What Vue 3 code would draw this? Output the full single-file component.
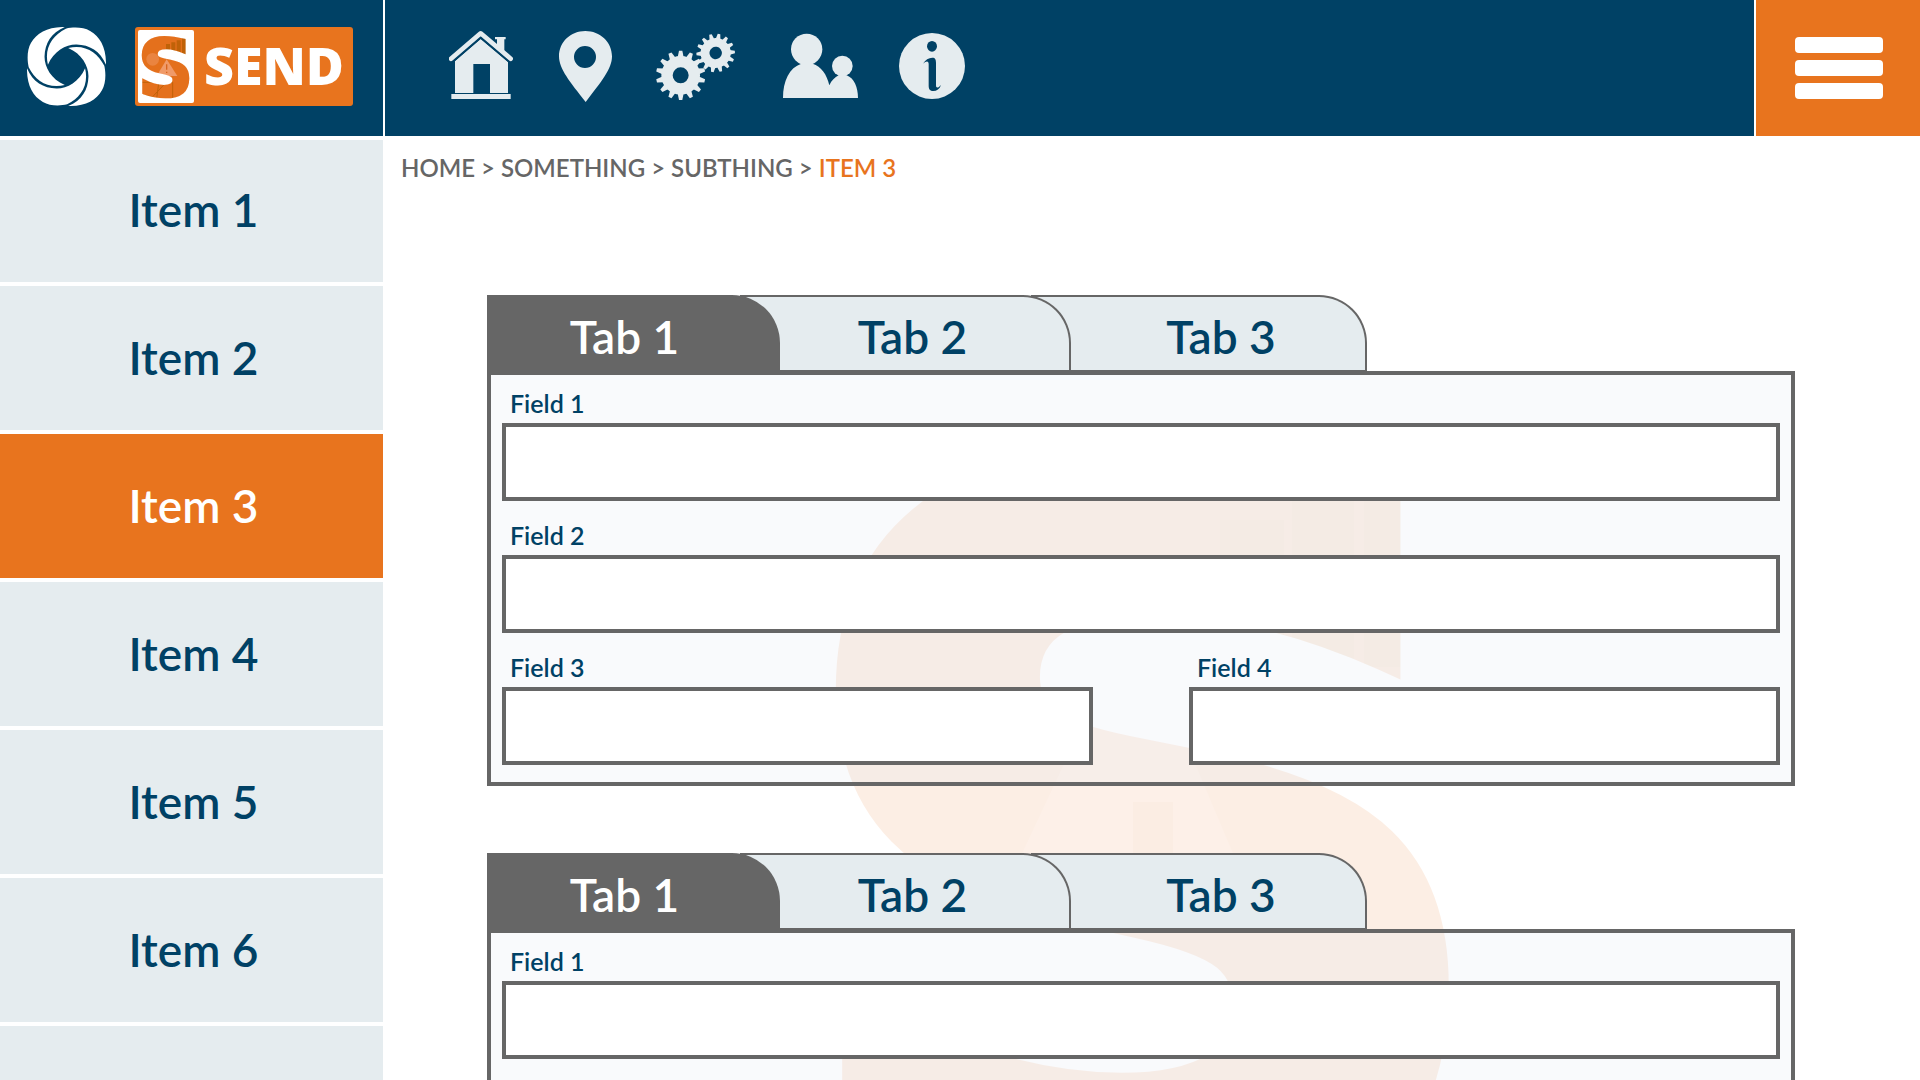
<template>
    <div class="page">
        <header class="top-bar">
            <div class="brand">
                <svg class="swirl" viewBox="-117 -117 234 234" aria-hidden="true">
                    <path
                        v-for="angle in [0, 90, 180, 270]"
                        :key="angle"
                        :transform="`rotate(${angle})`"
                        d="M-55 -5 C-67 -55 -42 -92 -2 -112 C20 -117 50 -117 70 -105 C100 -88 118 -55 117 -5 C100 -46 68 -64 30 -65 C0 -66 -38 -46 -55 -5 Z"
                    />
                </svg>
                <div class="send-logo">
                    <svg class="send-mark" viewBox="0 0 168 219" aria-hidden="true">
                        <defs>
                            <mask id="mark-mask">
                                <text class="mark-letter" x="83" y="197" text-anchor="middle">S</text>
                            </mask>
                        </defs>
                        <rect width="168" height="219" fill="#ffffff" />
                        <g mask="url(#mark-mask)">
                            <rect width="168" height="219" fill="#e4701c" />
                            <path d="M84 60 V42 H96 V64 Z M100 60 V37 H112 V66 Z M116 62 V31 H128 V68 Z M132 72 V25 H152 V72 Z" fill="#c06208" />
                            <circle cx="44" cy="88" r="19" fill="#ea8440" />
                            <path d="M86 88 L118 138 H56 Z" fill="#f09a68" />
                            <path d="M86 103 V119 M86 125 V129" stroke="#d8641c" stroke-width="4" />
                            <path d="M12 157 H104 V206 M12 196 L44 200 L80 162 M62 160 L56 206" fill="none" stroke="#c06208" stroke-width="3" />
                        </g>
                    </svg>
                    <span class="send-name">SEND</span>
                </div>
            </div>

            <nav class="icon-nav" aria-label="Main">
                <a href="#" aria-label="Home">
                    <svg width="64" height="73" viewBox="87 60 192 219">
                        <path d="M93 146 L182 70 L272 146" fill="none" stroke="#e5ecef" stroke-width="14" stroke-linecap="round" stroke-linejoin="round" />
                        <path d="M225 81 H257 V88 H253 V128 L231 108 V88 H225 Z" />
                        <path d="M182 87 L264 156 V249 H210 V162 H160 V249 H105 V153 Z" />
                        <path class="cut-line" d="M96 158 L182 84 L270 158" />
                        <rect x="94" y="252" width="178" height="15" />
                    </svg>
                </a>
                <a href="#" aria-label="Location">
                    <svg width="59" height="73" viewBox="399 60 177 219">
                        <path fill-rule="evenodd" d="M496 63 C540 63 576 96 576 139 C576 176 545 214 497 276 C450 216 417 177 417 139 C417 96 452 63 496 63 Z M495 108 A33 33 0 1 0 495 174 A33 33 0 1 0 495 108 Z" />
                    </svg>
                </a>
                <a href="#" aria-label="Settings">
                    <svg width="83" height="73" viewBox="696 60 249 219">
                        <g v-for="gear in gears" :key="gear.x" :transform="`translate(${gear.x} ${gear.y}) rotate(${gear.turn}) scale(${gear.scale})`">
                            <circle r="41" fill="none" stroke="#e5ecef" stroke-width="34" />
                            <path
                                v-for="n in 14"
                                :key="n"
                                :transform="`rotate(${n * 360 / 14})`"
                                d="M-9 -54 L-5 -74 H5 L9 -54 Z"
                            />
                        </g>
                    </svg>
                </a>
                <a href="#" aria-label="Users">
                    <svg width="83" height="73" viewBox="105 60 249 219">
                        <circle cx="200" cy="118" r="47" />
                        <path d="M129 264 C129 212 148 173 184 161 H218 C244 170 260 192 268 226 C275 211 284 202 296 196 H320 C343 205 354 233 354 264 Z" />
                        <circle cx="307" cy="168" r="31" />
                    </svg>
                </a>
                <a href="#" aria-label="Information">
                    <svg width="67" height="73" viewBox="474 60 201 219">
                        <circle cx="576" cy="168" r="99" />
                        <ellipse class="cut" cx="576" cy="109" rx="15" ry="16" />
                        <path class="cut" d="M549 161 C556 149 566 143 577 143 C586 143 588 149 588 158 V226 C588 236 595 234 603 225 C599 237 590 243 580 243 C570 243 566 237 566 227 V163 C566 153 560 152 549 161 Z" />
                    </svg>
                </a>
            </nav>

            <button class="menu-button" type="button" aria-label="Menu">
                <span></span>
                <span></span>
                <span></span>
            </button>
        </header>

        <div class="body">
            <nav class="sidebar" aria-label="Items">
                <a
                    v-for="item in items"
                    :key="item"
                    href="#"
                    class="side-item"
                    :class="{ active: item === activeItem }"
                    @click.prevent="activeItem = item"
                >{{ item }}</a>
            </nav>

            <main class="content">
                <svg class="watermark" viewBox="0 0 605 821" aria-hidden="true">
                    <defs>
                        <mask id="watermark-mask" maskUnits="userSpaceOnUse" x="-20" y="-20" width="645" height="861">
                            <text class="watermark-letter" x="302" y="785" text-anchor="middle">S</text>
                        </mask>
                    </defs>
                    <g mask="url(#watermark-mask)">
                        <rect x="-20" y="-20" width="645" height="861" fill="#fceee4" />
                        <path d="M379 240 V93 H443 V240 Z M451 240 V60 H513 V240 Z M523 240 V20 H605 V240 Z" fill="#f9ede1" />
                        <path d="M292 190 L402 450 H170 Z" fill="#fdf0e8" />
                        <path d="M292 375 H332 V430 H292 Z" fill="#fbede3" />
                        <path d="M20 660 H380 V821" fill="none" stroke="#faeadd" stroke-width="10" />
                    </g>
                </svg>

                <div class="breadcrumb">
                    <a href="#">HOME</a> &gt; <a href="#">SOMETHING</a> &gt; <a href="#">SUBTHING</a> &gt; <span class="current">ITEM 3</span>
                </div>

                <section v-for="(section, s) in sections" :key="s" class="section">
                    <div class="tabs" role="tablist">
                        <button
                            v-for="(tab, t) in tabs"
                            :key="tab"
                            type="button"
                            role="tab"
                            class="tab"
                            :class="{ active: section.tab === t }"
                            :aria-selected="section.tab === t"
                            @click="section.tab = t"
                        >{{ tab }}</button>
                    </div>
                    <form class="panel" @submit.prevent>
                        <div v-for="(field, f) in section.fields" :key="f" class="field" :class="{ half: f > 1 }">
                            <label :for="`field-${s}-${f}`">Field {{ f + 1 }}</label>
                            <input :id="`field-${s}-${f}`" v-model="section.fields[f]" type="text" />
                        </div>
                    </form>
                </section>
            </main>
        </div>
    </div>
</template>

<script setup>
import { ref, reactive } from 'vue';

const items = ['Item 1', 'Item 2', 'Item 3', 'Item 4', 'Item 5', 'Item 6', 'Item 7'];
const activeItem = ref('Item 3');

const tabs = ['Tab 1', 'Tab 2', 'Tab 3'];
const sections = reactive([
    { tab: 0, fields: ['', '', '', ''] },
    { tab: 0, fields: ['', '', '', ''] }
]);

// The two cogs of the settings icon
const gears = [
    { x: 782, y: 196, turn: 0, scale: 1 },
    { x: 887, y: 129, turn: 10, scale: 0.78 }
];
</script>

<style>
body {
    margin: 0;
    background: #ffffff;
}
</style>

<style scoped>
.page {
    display: flex;
    flex-direction: column;
    height: 100vh;
    overflow: hidden;
    font-family: Lato, "Liberation Sans", sans-serif;
    font-weight: 600;
    color: #004165;
}
.page * {
    box-sizing: border-box;
}
a {
    color: inherit;
    text-decoration: none;
}
button {
    font: inherit;
    color: inherit;
    cursor: pointer;
}

/* Header */
.top-bar {
    position: relative;
    z-index: 1;
    display: flex;
    flex-shrink: 0;
    height: 140px;
    border-bottom: 4px solid #ffffff;
    background: #004165;
}
.brand {
    display: flex;
    align-items: center;
    gap: 29px;
    width: 385px;
    padding: 0 0 4px 27px;
    border-right: 2px solid #ffffff;
}
.swirl {
    width: 79px;
    height: 79px;
    fill: #ffffff;
}
.send-logo {
    display: flex;
    align-items: center;
    width: 218px;
    height: 79px;
    padding: 3px;
    border-radius: 3px;
    background: #e8741e;
}
.send-mark {
    width: 56px;
    height: 73px;
    border-radius: 2px;
}
.mark-letter {
    font-family: "DejaVu Sans", sans-serif;
    font-size: 234px;
    font-weight: 700;
    fill: #ffffff;
    stroke: #ffffff;
    stroke-width: 8px;
}
.send-name {
    flex: 1;
    padding: 0 0 4px 4px;
    text-align: center;
    font-family: "Open Sans", sans-serif;
    font-size: 52px;
    line-height: 69px;
    font-weight: 800;
    color: #ffffff;
}
.icon-nav {
    display: flex;
    flex: 1;
    align-items: center;
    gap: 40px;
    padding: 0 64px 3px;
}
.icon-nav a,
.icon-nav svg {
    display: block;
}
.icon-nav svg {
    fill: #e5ecef;
}
.icon-nav .cut {
    fill: #004165;
}
.icon-nav .cut-line {
    fill: none;
    stroke: #004165;
    stroke-width: 4px;
}
.menu-button {
    display: flex;
    flex-direction: column;
    align-items: center;
    justify-content: center;
    gap: 7px;
    width: 166px;
    padding: 0 0 0 2px;
    border: none;
    border-left: 2px solid #ffffff;
    background: #e8741e;
}
.menu-button span {
    width: 88px;
    height: 16px;
    border-radius: 4px;
    background: #ffffff;
}

/* Sidebar */
.body {
    display: flex;
    flex: 1;
    min-height: 0;
}
.sidebar {
    flex-shrink: 0;
    width: 383px;
    margin-top: -2px;
}
.side-item {
    display: flex;
    align-items: center;
    justify-content: center;
    height: 144px;
    margin-bottom: 4px;
    padding: 0 0 2px 4px;
    background: #e5ecef;
    font-size: 46px;
}
.side-item.active {
    background: #e8741e;
    color: #ffffff;
}

/* Content */
.content {
    position: relative;
    flex: 1;
    overflow: hidden;
    padding: 14px 125px 0 104px;
}
.watermark {
    position: absolute;
    top: 287px;
    left: 458px;
    z-index: -1;
    width: 605px;
    height: 821px;
    overflow: visible;
}
.watermark-letter {
    font-family: "DejaVu Sans", sans-serif;
    font-size: 1010px;
    font-weight: 700;
    fill: #ffffff;
    stroke: #ffffff;
    stroke-width: 32px;
}
.breadcrumb {
    margin-left: -86px;
    font-size: 24px;
    line-height: 28px;
    color: #666666;
}
.breadcrumb .current {
    color: #e8741e;
}
.section {
    margin-top: 67px;
}
.breadcrumb + .section {
    margin-top: 113px;
}
.tabs {
    display: flex;
}
.tab {
    position: relative;
    width: 336px;
    height: 76px;
    padding: 6px 0 0 46px;
    border: 2px solid #666666;
    border-bottom-width: 1px;
    border-left: none;
    border-radius: 0 48px 0 0;
    background: #e5ecef;
    font-size: 46px;
}
.tab + .tab {
    margin-left: -40px;
}
.tab:nth-child(1) {
    z-index: 3;
    width: 293px;
    padding: 6px 16px 0 0;
}
.tab:nth-child(2) {
    z-index: 2;
    width: 331px;
    padding: 6px 0 0 16px;
}
.tab.active {
    border-color: #666666;
    background: #666666;
    color: #ffffff;
}
.panel {
    display: flex;
    flex-wrap: wrap;
    gap: 6px 96px;
    padding: 0 11px 17px;
    border: 4px solid #666666;
    background: rgba(225, 230, 240, 0.2);
}
.field {
    display: flex;
    flex-direction: column;
    width: 100%;
}
.field.half {
    flex: 1;
    width: auto;
}
.field label {
    padding: 14px 8px 5px;
    font-size: 25px;
    line-height: 29px;
}
.field input {
    width: 100%;
    height: 78px;
    padding: 0 16px;
    border: 4px solid #666666;
    border-radius: 0;
    background: #ffffff;
    font: inherit;
    font-size: 25px;
    color: #004165;
}
</style>
